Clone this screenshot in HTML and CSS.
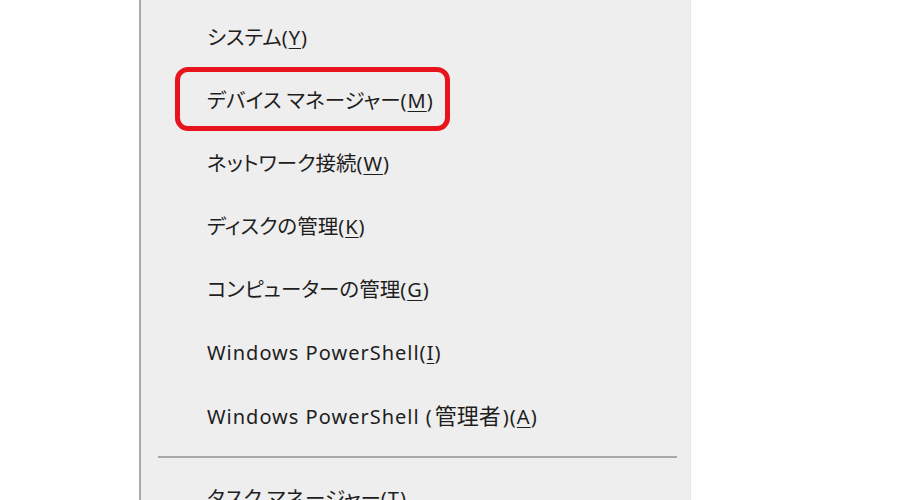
FILE: index.html
```html
<!DOCTYPE html>
<html lang="ja">
<head>
<meta charset="utf-8">
<title>Menu</title>
<link rel="stylesheet" href="styles.css">
</head>
<body>
<div class="menu">
  <div class="item">システム<span class="lat">(<u>Y</u>)</span></div>
  <div class="item highlighted">デバイス マネージャー<span class="lat">(<u>M</u>)</span></div>
  <div class="item">ネットワーク接続<span class="lat">(<u>W</u>)</span></div>
  <div class="item">ディスクの管理<span class="lat">(<u>K</u>)</span></div>
  <div class="item">コンピューターの管理<span class="lat">(<u>G</u>)</span></div>
  <div class="item"><span class="lat">Windows PowerShell(<u>I</u>)</span></div>
  <div class="item"><span class="lat">Windows PowerShell (</span><span class="kanji">管理者</span><span class="lat">)(<u>A</u>)</span></div>
  <div class="separator"></div>
  <div class="item">タスク マネージャー<span class="lat">(<u>T</u>)</span></div>
</div>
</body>
</html>
```
FILE: styles.css
```css
html, body {
  margin: 0;
  padding: 0;
  background: #ffffff;
  overflow: hidden;
  height: 500px;
}
.menu {
  margin-left: 139px;
  width: 552px;
  height: 600px;
  background: #eeeeee;
  border-left: 2px solid #a9a9a9;
  border-right: 1px solid #e6e6e6;
  padding-top: 6px;
  box-sizing: border-box;
  font-family: "Noto Sans", "Noto Sans CJK JP", sans-serif;
  font-size: 20.5px;
  font-feature-settings: "palt";
  color: #1e1e1e;
}
.item {
  position: relative;
  height: 63px;
  line-height: 63px;
  padding-left: 66px;
  white-space: nowrap;
}
.lat {
  font-size: 20px;
  letter-spacing: 1px;
  font-feature-settings: normal;
}
.kanji {
  font-size: 22px;
  margin: 0 2px;
}
.item u {
  text-decoration-thickness: 1px;
  text-underline-offset: 3px;
}
.highlighted::before {
  content: "";
  position: absolute;
  left: 34px;
  top: -2px;
  width: 275px;
  height: 64px;
  box-sizing: border-box;
  border: 5px solid #e8141c;
  border-radius: 13px;
}
.separator {
  height: 2px;
  background: #a8a8a8;
  margin: 9px 13px 9px 17px;
}
```
